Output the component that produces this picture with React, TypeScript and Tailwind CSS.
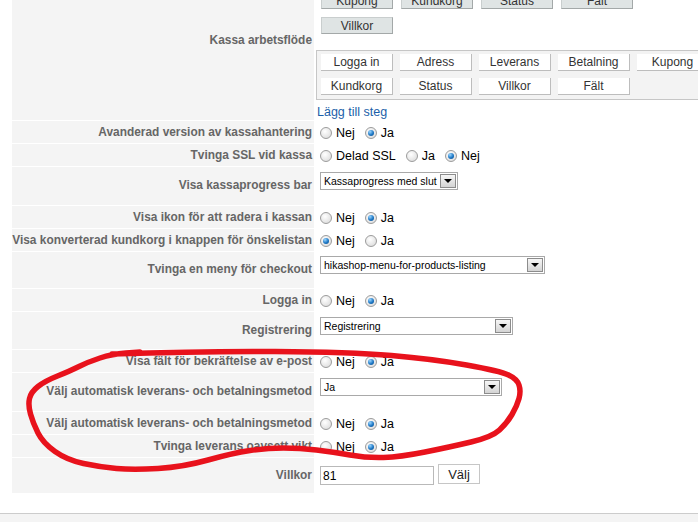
import React from 'react';

type Row = {
  label: string;
  h: string;
  kind: 'radio' | 'select' | 'input';
  options?: string[];
  checked?: number;
  value?: string;
  w?: string;
  pt?: string;
};

const rows: Row[] = [
  { label: 'Avanderad version av kassahantering', h: 'h-[22px]', kind: 'radio', options: ['Nej', 'Ja'], checked: 1 },
  { label: 'Tvinga SSL vid kassa', h: 'h-[22px]', kind: 'radio', options: ['Delad SSL', 'Ja', 'Nej'], checked: 2 },
  { label: 'Visa kassaprogress bar', h: 'h-[38px]', kind: 'select', value: 'Kassaprogress med slut', w: 'w-[138px]', pt: 'pt-[5px]' },
  { label: 'Visa ikon för att radera i kassan', h: 'h-[22px]', kind: 'radio', options: ['Nej', 'Ja'], checked: 1 },
  { label: 'Visa konverterad kundkorg i knappen för önskelistan', h: 'h-[22px]', kind: 'radio', options: ['Nej', 'Ja'], checked: 0 },
  { label: 'Tvinga en meny för checkout', h: 'h-[36px]', kind: 'select', value: 'hikashop-menu-for-products-listing', w: 'w-[225px]', pt: 'pt-[4px]' },
  { label: 'Logga in', h: 'h-[22px]', kind: 'radio', options: ['Nej', 'Ja'], checked: 1 },
  { label: 'Registrering', h: 'h-[37px]', kind: 'select', value: 'Registrering', w: 'w-[193px]', pt: 'pt-[5px]' },
  { label: 'Visa fält för bekräftelse av e-post', h: 'h-[22px]', kind: 'radio', options: ['Nej', 'Ja'], checked: 1 },
  { label: 'Välj automatisk leverans- och betalningsmetod', h: 'h-[38px]', kind: 'select', value: 'Ja', w: 'w-[182px]', pt: 'pt-[5px]' },
  { label: 'Välj automatisk leverans- och betalningsmetod', h: 'h-[22px]', kind: 'radio', options: ['Nej', 'Ja'], checked: 1 },
  { label: 'Tvinga leverans oavsett vikt', h: 'h-[22px]', kind: 'radio', options: ['Nej', 'Ja'], checked: 1 },
  { label: 'Villkor', h: 'h-[35px]', kind: 'input', value: '81' },
];

const steps = ['Logga in', 'Adress', 'Leverans', 'Betalning', 'Kupong', 'Kundkorg', 'Status', 'Villkor', 'Fält'];

// hand drawn marker loop over the screenshot
const loop: [number, number][] = [
  [112, 354], [200, 351], [350, 352], [433, 359], [500, 371], [517, 379], [521, 391], [517, 406],
  [507, 423], [492, 437], [450, 447], [400, 457], [367, 458], [333, 452], [300, 448], [267, 448],
  [233, 453], [183, 467], [133, 470], [100, 467], [67, 460], [43, 443], [33, 423], [28, 405],
  [31, 392], [45, 381], [70, 371], [88, 362], [112, 354], [140, 352],
];

const smoothPath = (pts: [number, number][]) => {
  let d = `M ${pts[0][0]} ${pts[0][1]}`;
  for (let i = 1; i < pts.length - 1; i++) {
    const mx = (pts[i][0] + pts[i + 1][0]) / 2;
    const my = (pts[i][1] + pts[i + 1][1]) / 2;
    d += ` Q ${pts[i][0]} ${pts[i][1]} ${mx} ${my}`;
  }
  const last = pts[pts.length - 1];
  return d + ` L ${last[0]} ${last[1]}`;
};

const Radio = ({ checked }: { checked?: boolean }) => (
  <span className="inline-flex w-[12px] h-[12px] shrink-0 rounded-full border border-[#9c9c9c] bg-[radial-gradient(circle_at_40%_35%,#ffffff,#d6d6d6)] items-center justify-center">
    {checked && (
      <span className="w-[6px] h-[6px] rounded-full bg-[radial-gradient(circle_at_35%_30%,#9ad6ff,#1c76c4_55%,#0a4a86)]" />
    )}
  </span>
);

const Radios = ({ options, checked }: { options: string[]; checked: number }) => (
  <div className="flex items-center">
    {options.map((o, i) => (
      <label key={o} className="flex items-center mr-[10px]">
        <Radio checked={i === checked} />
        <span className="ml-[4px] text-[12.5px] leading-none text-black">{o}</span>
      </label>
    ))}
  </div>
);

const Select = ({ value, w }: { value: string; w: string }) => (
  <div className={`flex items-center h-[18px] border border-[#a9a9a9] bg-white ${w}`}>
    <span className="pl-[3px] text-[10.5px] leading-none text-black whitespace-nowrap">{value}</span>
    <span className="ml-auto mr-[1px] w-[16px] h-[14px] border border-[#8c8c8c] bg-[linear-gradient(#f6f6f6,#d4d4d4)] flex items-center justify-center">
      <span className="w-0 h-0 border-x-[4px] border-x-transparent border-t-[4px] border-t-black" />
    </span>
  </div>
);

const GrayBtn = ({ text }: { text: string }) => (
  <div className="w-[72px] h-[17px] flex items-center justify-center bg-[#dfe4e4] border border-[#a3a8a8] border-t-[#c9cece] border-l-[#c9cece] text-[12px] leading-none text-[#333]">
    {text}
  </div>
);

const WhiteBtn = ({ text }: { text: string }) => (
  <div className="w-[72px] h-[17px] flex items-center justify-center bg-white border-r border-b border-[#bdbdbd] text-[12px] leading-none text-[#333]">
    {text}
  </div>
);

const Label = ({ text, h, pt = '' }: { text: string; h: string; pt?: string }) => (
  <div className={`w-[302px] shrink-0 ${h} ${pt} bg-[#f4f4f4] flex items-center justify-end pr-[2px] text-[11.9px] font-bold leading-none text-[#666] whitespace-nowrap`}>
    {text}
  </div>
);

const App = () => {
  return (
    <div className="relative h-screen w-full overflow-hidden bg-white font-['Liberation_Sans',Arial,sans-serif]">
      <div className="-mt-[38px] pl-[12px] flex flex-col gap-[1px]">
        {/* Kassa arbetsflöde */}
        <div className="flex">
          <Label text="Kassa arbetsflöde" h="h-[158px]" />
          <div className="ml-[2px] flex-1 pt-[5px] pl-[5px]">
            <div className="flex flex-col gap-[8px] w-[320px]">
              <div className="flex gap-[8px]">
                {['Logga in', 'Adress', 'Leverans', 'Betalning'].map((s) => <GrayBtn key={s} text={s} />)}
              </div>
              <div className="flex gap-[8px]">
                {['Kupong', 'Kundkorg', 'Status', 'Fält'].map((s) => <GrayBtn key={s} text={s} />)}
              </div>
              <div className="flex gap-[8px]">
                <GrayBtn text="Villkor" />
              </div>
            </div>
            <div className="mt-[16px] -ml-[5px] w-[400px] border border-[#c6c6c6] bg-[#f3f3f3] pt-[3px] pb-[4px] pl-[4px] flex flex-wrap gap-x-[7px] gap-y-[7px]">
              {steps.map((s) => <WhiteBtn key={s} text={s} />)}
            </div>
            <div className="mt-[5px] -ml-[4px] h-[14px] flex items-center text-[12.5px] leading-none text-[#1b5fa9]">
              Lägg till steg
            </div>
          </div>
        </div>

        {rows.map((r, i) => (
          <div key={i} className="flex">
            <Label text={r.label} h={r.h} pt={r.kind === 'radio' ? 'pt-[2px]' : ''} />
            {r.kind === 'radio' && (
              <div className="ml-[2px] flex-1 pl-[4px] pt-[2px] flex items-center">
                <Radios options={r.options!} checked={r.checked!} />
              </div>
            )}
            {r.kind === 'select' && (
              <div className={`ml-[2px] flex-1 pl-[4px] ${r.pt}`}>
                <Select value={r.value!} w={r.w!} />
              </div>
            )}
            {r.kind === 'input' && (
              <div className="ml-[2px] flex-1 pl-[4px] flex items-center gap-[4px]">
                <div className="w-[114px] h-[19px] border border-[#b9b9b9] bg-white flex items-center pl-[2px] text-[12px] leading-none text-black">
                  {r.value}
                </div>
                <div className="-mt-[3px] w-[42px] h-[20px] border border-[#c6c6c6] bg-white flex items-center justify-center text-[13px] leading-none text-[#222]">
                  Välj
                </div>
              </div>
            )}
          </div>
        ))}
      </div>

      <div className="mt-[20px] border-t border-[#cccccc] bg-[#f4f4f4] h-[10px]" />

      <svg
        className="absolute top-0 left-0 pointer-events-none"
        width="698"
        height="522"
        viewBox="0 0 698 522"
      >
        <path
          d={smoothPath(loop)}
          fill="none"
          stroke="#e8121c"
          strokeWidth="5.5"
          strokeLinecap="round"
          strokeLinejoin="round"
        />
      </svg>
    </div>
  );
};

export default App;
